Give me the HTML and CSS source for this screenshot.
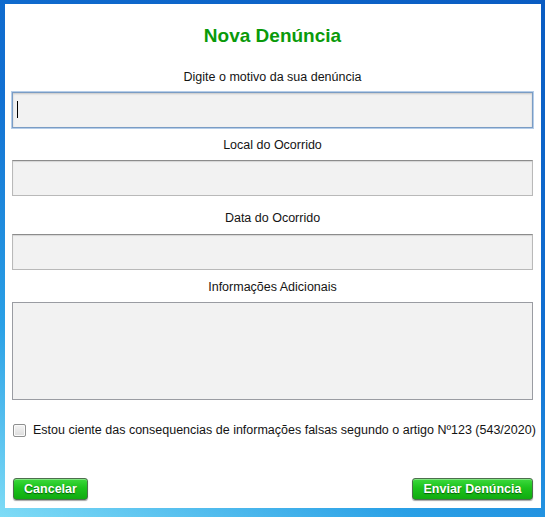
FILE: index.html
```html
<!DOCTYPE html>
<html lang="pt-BR">
<head>
<meta charset="utf-8">
<title>Nova Denúncia</title>
<link rel="stylesheet" href="styles.css">
</head>
<body>
<div class="desk">
  <form class="panel">
    <h1 class="title">Nova Denúncia</h1>

    <label class="lbl lbl-1" for="motivo">Digite o motivo da sua denúncia</label>
    <div class="focus-wrap">
      <input class="field focused" id="motivo" type="text">
      <span class="caret"></span>
    </div>

    <label class="lbl lbl-2" for="local">Local do Ocorrido</label>
    <input class="field" id="local" type="text">

    <label class="lbl lbl-3" for="data">Data do Ocorrido</label>
    <input class="field" id="data" type="text">

    <label class="lbl lbl-4" for="info">Informações Adicionais</label>
    <textarea class="area" id="info"></textarea>

    <label class="check-row">
      <span class="check"></span>
      <span class="check-text">Estou ciente das consequencias de informações falsas segundo o artigo Nº123 (543/2020)</span>
    </label>

    <div class="actions">
      <button type="button" class="btn btn-cancel">Cancelar</button>
      <button type="button" class="btn btn-send">Enviar Denúncia</button>
    </div>
  </form>
</div>
</body>
</html>
```
FILE: styles.css
```css
html, body {
  margin: 0;
  padding: 0;
}
body {
  width: 545px;
  height: 517px;
  overflow: hidden;
  background: linear-gradient(205deg, #0a5cc2 0%, #1170d2 45%, #2aa0e6 75%, #7fdcf6 100%);
  font-family: "Liberation Sans", Arial, sans-serif;
}
.desk {
  padding: 4px 4px 9px 5px;
}
.panel {
  width: 536px;
  height: 504px;
  box-sizing: border-box;
  background: #ffffff;
  padding: 21px 8px 8px 7px;
  display: flex;
  flex-direction: column;
}
.title {
  margin: 0;
  font-size: 19px;
  line-height: 22px;
  font-weight: bold;
  color: #0a9a0a;
  text-align: center;
}
.lbl {
  display: block;
  font-size: 12.5px;
  line-height: 16px;
  color: #141414;
  text-align: center;
  margin-bottom: 7px;
}
.lbl-1 { margin-top: 22px; }
.lbl-2 { margin-top: 9px; }
.lbl-3 { margin-top: 14px; margin-bottom: 8px; }
.lbl-4 { margin-top: 9px; }

.field, .area {
  display: block;
  width: 100%;
  box-sizing: border-box;
  margin: 0;
  background: #f2f2f2;
  border: 1px solid #b9b9b9;
  border-top-color: #8c8c8c;
  box-shadow: inset 0 1px 1px rgba(0,0,0,0.12);
  font-family: "Liberation Sans", Arial, sans-serif;
  font-size: 13px;
  outline: none;
  border-radius: 0;
}
.field {
  height: 36px;
  padding: 0 5px;
}
.area {
  height: 98px;
  resize: none;
  border: 1px solid #9a9ca2;
  box-shadow: none;
}
.focus-wrap {
  position: relative;
}
.field.focused {
  border: 1px solid #7a9cc4;
  box-shadow: 0 0 0 1px #b5cde9, inset 0 1px 2px rgba(0,0,0,0.18);
}
.caret {
  position: absolute;
  left: 5px;
  top: 9px;
  width: 1px;
  height: 17px;
  background: #000;
}

.check-row {
  margin-top: 22px;
  height: 16px;
  display: flex;
  align-items: center;
  gap: 7px;
  padding-left: 1px;
  white-space: nowrap;
  font-size: 12.5px;
  color: #141414;
}
.check {
  width: 13px;
  height: 13px;
  box-sizing: border-box;
  border: 1px solid #8e8f8f;
  border-radius: 2px;
  background: linear-gradient(#f4f4f4, #dcdcdc);
  box-shadow: inset 0 0 0 1px #fafafa;
  flex: none;
}
.actions {
  margin-top: auto;
  display: flex;
  justify-content: space-between;
  padding: 0 0 0 1px;
}
.btn {
  height: 22px;
  box-sizing: border-box;
  border: 1px solid #4d6f4d;
  border-radius: 3px;
  background: linear-gradient(#3dd93d 0%, #1cc21c 45%, #10ab10 100%);
  box-shadow: 0 1px 1px rgba(0,0,0,0.35), inset 0 1px 0 rgba(255,255,255,0.35);
  color: #fff;
  font-family: "Liberation Sans", Arial, sans-serif;
  font-weight: bold;
  font-size: 12.5px;
  line-height: 20px;
  padding: 0;
  text-shadow: 0 1px 1px rgba(0,60,0,0.7);
  cursor: pointer;
}
.btn-cancel { width: 75px; }
.btn-send { width: 121px; }
```
